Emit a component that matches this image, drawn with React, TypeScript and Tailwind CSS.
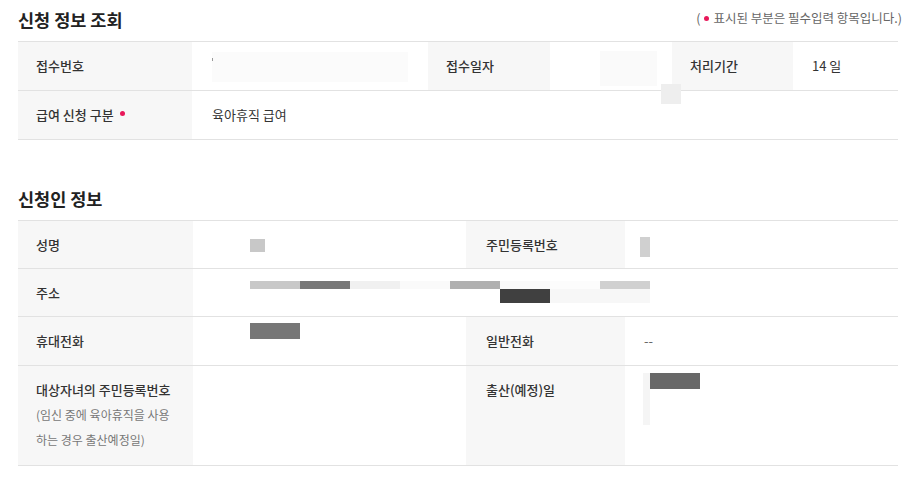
const font = { fontFamily: '"Noto Sans CJK KR", "Noto Sans", sans-serif' };

const Dot = () => <span className="inline-block h-[5px] w-[5px] rounded-full bg-[#e8185a]" />;

const Label = ({ children, className = '' }: { children: React.ReactNode; className?: string }) => (
  <div className={`bg-[#f7f7f7] pl-[18px] text-[13px] font-medium text-[#333] flex ${className}`}>{children}</div>
);

const addrTop = ['#c8c8c8', '#787878', '#f0f0f0', '#fafafa', '#b0b0b0', '#fafafa', '#fcfcfc', '#d0d0d0'];
const addrBottom = ['#ffffff', '#ffffff', '#ffffff', '#ffffff', '#ffffff', '#404040', '#f7f7f7', '#f7f7f7'];

export default function App() {
  return (
    <div className="w-[920px] h-[489px] bg-white px-[18px] pt-[8px] text-[#333]" style={font}>
      {/* 신청 정보 조회 */}
      <div className="flex items-center justify-between mr-[4px] h-[24px] mb-[9px]">
        <h2 className="text-[17.5px] font-bold text-[#222] leading-[24px]">신청 정보 조회</h2>
        <p className="text-[12.5px] text-[#666] flex items-center gap-[4px] -mt-[4px] -mr-[4px]">
          ( <Dot /> 표시된 부분은 필수입력 항목입니다.)
        </p>
      </div>
      <div className="border-t border-[#e2e2e2] w-[880px]">
        <div className="grid grid-cols-[174px_236px_122px_122px_121px_105px] h-[49px] border-b border-[#e2e2e2]">
          <Label className="items-center">접수번호</Label>
          <div className="flex items-center pl-[20px]">
            <div className="relative h-[30px] w-[196px] bg-[#fbfbfb] mt-[2px]">
              <span className="absolute left-0 top-[6px] h-[3px] w-[1px] bg-[#999]" />
            </div>
          </div>
          <Label className="items-center">접수일자</Label>
          <div className="relative flex items-start pl-[50px] pt-[9px]">
            <div className="h-[35px] w-[57px] bg-[#fafafa]" />
            <div className="absolute left-[111px] top-[42px] h-[20px] w-[20px] bg-[#eeeeee]" />
          </div>
          <Label className="items-center">처리기간</Label>
          <div className="flex items-center pl-[19px] text-[13px]">14 일</div>
        </div>
        <div className="grid grid-cols-[174px_706px] h-[49px] border-b border-[#e2e2e2]">
          <Label className="items-center gap-[6px]">
            급여 신청 구분 <span className="-mt-[9px]"><Dot /></span>
          </Label>
          <div className="flex items-center pl-[20px] text-[13px]">육아휴직 급여</div>
        </div>
      </div>

      {/* 신청인 정보 */}
      <h2 className="mt-[47px] mb-[9px] text-[17.5px] font-bold text-[#222] leading-[24px]">신청인 정보</h2>
      <div className="border-t border-[#e2e2e2] w-[880px]">
        <div className="grid grid-cols-[175px_273px_159px_273px] h-[48px] border-b border-[#e2e2e2]">
          <Label className="items-center">성명</Label>
          <div className="flex items-start pl-[57px] pt-[18px]">
            <div className="h-[13px] w-[15px] bg-[#c8c8c8]" />
          </div>
          <Label className="items-center pl-[20px]">주민등록번호</Label>
          <div className="flex items-start pl-[15px] pt-[16px]">
            <div className="h-[20px] w-[10px] bg-[#d0d0d0]" />
          </div>
        </div>
        <div className="grid grid-cols-[175px_705px] h-[48px] border-b border-[#e2e2e2]">
          <Label className="items-center">주소</Label>
          <div className="flex flex-col pl-[57px] pt-[12px]">
            <div className="flex">
              {addrTop.map((c, i) => (
                <div key={i} className="h-[8px] w-[50px]" style={{ backgroundColor: c }} />
              ))}
            </div>
            <div className="flex">
              {addrBottom.map((c, i) => (
                <div key={i} className="h-[14px] w-[50px]" style={{ backgroundColor: c }} />
              ))}
            </div>
          </div>
        </div>
        <div className="grid grid-cols-[175px_273px_159px_273px] h-[49px] border-b border-[#e2e2e2]">
          <Label className="items-center">휴대전화</Label>
          <div className="flex items-start pl-[57px] pt-[6px]">
            <div className="h-[16px] w-[50px] bg-[#777777]" />
          </div>
          <Label className="items-center pl-[20px]">일반전화</Label>
          <div className="flex items-center pl-[19px] text-[13px] text-[#666]">--</div>
        </div>
        <div className="grid grid-cols-[175px_273px_159px_273px] h-[100px] border-b border-[#e2e2e2]">
          <Label className="flex-col pt-[11px] leading-[25px]">
            <span>대상자녀의 주민등록번호</span>
            <span className="font-normal text-[12px] text-[#777]">(임신 중에 육아휴직을 사용</span>
            <span className="font-normal text-[12px] text-[#777]">하는 경우 출산예정일)</span>
          </Label>
          <div />
          <Label className="pl-[20px] pt-[11px] leading-[25px]">출산(예정)일</Label>
          <div className="flex items-start pl-[18px] pt-[7px]">
            <div className="h-[52px] w-[7px] bg-[#f5f5f5]" />
            <div className="h-[16px] w-[50px] bg-[#686868]" />
          </div>
        </div>
      </div>
    </div>
  );
}
